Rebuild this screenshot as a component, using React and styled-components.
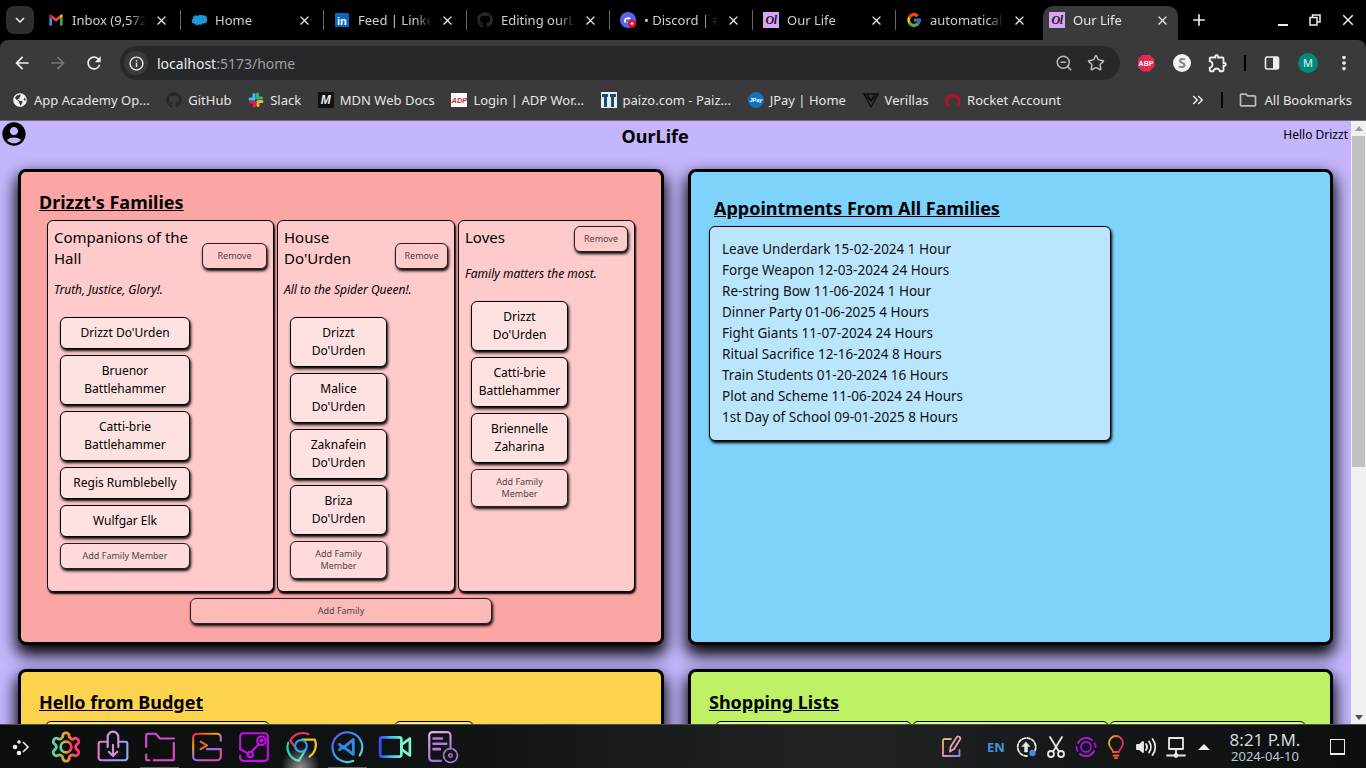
import React from 'react';
import styled, { createGlobalStyle } from 'styled-components';
import { FaGithub, FaGlobeAmericas } from 'react-icons/fa';
import { FcGoogle } from 'react-icons/fc';
import {
	MdAccountCircle, MdAdd, MdArrowBack, MdArrowForward, MdClose, MdKeyboardArrowDown,
	MdKeyboardDoubleArrowRight, MdMoreVert, MdOutlineExtension, MdOutlineFolder, MdOutlineInfo, MdRefresh,
} from 'react-icons/md';
import { Star, ZoomOut } from 'lucide-react';

const GlobalStyle = createGlobalStyle`
	html, body {
		margin: 0;
		padding: 0;
		overflow: hidden;
	}
	body {
		font-family: "Noto Sans", "Open Sans", sans-serif;
	}
	* {
		box-sizing: border-box;
	}
`;

/* ---------- favicons ---------- */

const Fav = styled.svg`
	width: 16px;
	height: 16px;
	flex: none;
`;

const Gmail = () => (
	<Fav viewBox="0 0 24 24">
		<path d="M2 7v12a1.5 1.5 0 0 0 1.5 1.5H6V10z" fill="#4285f4" />
		<path d="M22 7v12a1.5 1.5 0 0 1-1.5 1.5H18V10z" fill="#34a853" />
		<path d="M6 10V5l6 4.5L18 5v5l-6 4.5z" fill="#ea4335" />
		<path d="M18 5l1.7-1.3A1.4 1.4 0 0 1 22 4.8V7l-4 3z" fill="#fbbc04" />
		<path d="M6 5L4.3 3.7A1.4 1.4 0 0 0 2 4.8V7l4 3z" fill="#c5221f" />
	</Fav>
);

const SalesforceIcon = () => (
	<Fav viewBox="0 0 24 24">
		<path d="M10 6a4.2 4.2 0 0 1 6.6-.6A5 5 0 0 1 24 10.5 5 5 0 0 1 17.5 17a3.7 3.7 0 0 1-5.4 1.3A4.3 4.3 0 0 1 5 17.3 3.8 3.8 0 0 1 3 10.2 4.3 4.3 0 0 1 10 6z" fill="#1798d8" />
	</Fav>
);

const LinkedinIcon = () => (
	<Fav viewBox="0 0 16 16">
		<rect x="1" y="1" width="14" height="14" rx="1" fill="#0a66c2" />
		<text x="3" y="12.5" fontSize="11" fontWeight="700" fontFamily="Liberation Sans" fill="#fff">in</text>
	</Fav>
);

const DiscordIcon = () => (
	<Fav viewBox="0 0 16 16">
		<circle cx="8" cy="8" r="8" fill="#5865f2" />
		<path d="M4 9a4 3.5 0 0 1 7-2.5l-2 1a2 2 0 1 0 0 3H4z" fill="#fff" />
		<circle cx="12" cy="11.5" r="4" fill="#e8112d" />
		<circle cx="12" cy="11.5" r="1.3" fill="#fff" />
	</Fav>
);

const OurLifeMark = styled.span`
	width: 16px;
	height: 16px;
	flex: none;
	background: #d8a6f7;
	color: #1d1326;
	font: italic 700 12px/16px "Liberation Serif", serif;
	text-align: center;
	letter-spacing: -0.5px;
`;
const OurLifeIcon = () => <OurLifeMark>Ol</OurLifeMark>;

const SlackIcon = () => (
	<Fav viewBox="0 0 16 16" fill="none" strokeWidth="3" strokeLinecap="round">
		<path d="M6 2.5v4.5H2" stroke="#36c5f0" strokeLinejoin="round" />
		<path d="M13.5 6H9.5V2" stroke="#2eb67d" strokeLinejoin="round" />
		<path d="M10 13.5V9.5h4" stroke="#ecb22e" strokeLinejoin="round" />
		<path d="M2.5 10H6.5v4" stroke="#e01e5a" strokeLinejoin="round" />
	</Fav>
);

const MdnMark = styled.span`
	width: 16px;
	height: 16px;
	flex: none;
	background: #111;
	color: #eee;
	font: italic 700 12px/16px "Liberation Sans", sans-serif;
	text-align: center;
`;
const MdnIcon = () => <MdnMark>M</MdnMark>;

const AdpIcon = () => (
	<Fav viewBox="0 0 16 16">
		<rect y="1" width="16" height="14" fill="#fff" />
		<text x="0.5" y="11" fontSize="7.5" fontWeight="700" fontStyle="italic" fontFamily="Liberation Sans" fill="#e0252c">ADP</text>
	</Fav>
);

const PaizoIcon = () => (
	<Fav viewBox="0 0 16 16">
		<rect width="16" height="16" fill="#e8eef0" />
		<path d="M1 2h6v3H6v10H3V5H1zM9 2h6v3h-2v10h-3V5H9z" fill="#14506e" />
	</Fav>
);

const JpayIcon = () => (
	<Fav viewBox="0 0 16 16">
		<circle cx="8" cy="8" r="8" fill="#1173bb" />
		<text x="1.5" y="10" fontSize="5.5" fontWeight="700" fontStyle="italic" fontFamily="Liberation Sans" fill="#fff">JPay</text>
	</Fav>
);

const VerillasIcon = () => (
	<Fav viewBox="0 0 16 16" fill="none" stroke="#0e0e0e" strokeWidth="1.3">
		<path d="M1 2h14L8 15z" />
		<path d="M4.5 2L8 9l3.5-7M1 2l7 7 7-7" />
	</Fav>
);

const RocketIcon = () => (
	<Fav viewBox="0 0 16 16" fill="none" stroke="#b5102c" strokeWidth="3">
		<path d="M3.5 14A6.3 6.3 0 1 1 12.5 14" />
	</Fav>
);

/* ---------- taskbar drawings ---------- */

const TaskSvg = styled.svg`
	width: 34px;
	height: 34px;
	fill: none;
	stroke-width: 2;
	stroke-linecap: round;
	stroke-linejoin: round;
`;

const Grad = ({ id, colors, x2 = 1, y2 = 1 }) => (
	<defs>
		<linearGradient id={id} x1="0" y1="0" x2={x2} y2={y2}>
			{colors.map((c, i) => <stop key={c + i} offset={i / (colors.length - 1)} stopColor={c} />)}
		</linearGradient>
	</defs>
);

const GearIcon = () => (
	<TaskSvg viewBox="0 0 24 24" strokeWidth="1.5">
		<Grad id="gear" colors={['#4fd8b0', '#f0a020', '#ff2d78']} x2={1} y2={0} />
		<path stroke="url(#gear)" d="M12.22 2h-.44a2 2 0 0 0-2 2v.18a2 2 0 0 1-1 1.73l-.43.25a2 2 0 0 1-2 0l-.15-.08a2 2 0 0 0-2.73.73l-.22.38a2 2 0 0 0 .73 2.73l.15.1a2 2 0 0 1 1 1.72v.51a2 2 0 0 1-1 1.74l-.15.09a2 2 0 0 0-.73 2.73l.22.38a2 2 0 0 0 2.73.73l.15-.08a2 2 0 0 1 2 0l.43.25a2 2 0 0 1 1 1.73V20a2 2 0 0 0 2 2h.44a2 2 0 0 0 2-2v-.18a2 2 0 0 1 1-1.73l.43-.25a2 2 0 0 1 2 0l.15.08a2 2 0 0 0 2.73-.73l.22-.39a2 2 0 0 0-.73-2.73l-.15-.08a2 2 0 0 1-1-1.74v-.5a2 2 0 0 1 1-1.74l.15-.09a2 2 0 0 0 .73-2.73l-.22-.38a2 2 0 0 0-2.73-.73l-.15.08a2 2 0 0 1-2 0l-.43-.25a2 2 0 0 1-1-1.73V4a2 2 0 0 0-2-2z" />
		<circle stroke="url(#gear)" cx="12" cy="12" r="3.8" />
	</TaskSvg>
);

const ShareIcon = () => (
	<TaskSvg viewBox="0 0 32 32">
		<Grad id="share" colors={['#f472b6', '#c084fc', '#93a5f8']} x2={1} y2={0.3} />
		<path stroke="url(#share)" d="M10 11H4.5a2 2 0 0 0-2 2v13A2.5 2.5 0 0 0 5 28.5h22a2.5 2.5 0 0 0 2.5-2.5V13a2 2 0 0 0-2-2H22" />
		<path stroke="#c79be8" d="M11 16V6.5a5 5 0 0 1 10 0V16" />
		<path stroke="#d38fe0" d="M16 14v10M12 20.5l4 4 4-4" />
	</TaskSvg>
);

const FolderIcon = () => (
	<TaskSvg viewBox="0 0 32 32">
		<Grad id="folder" colors={['#c44fd8', '#ef45c8']} />
		<path stroke="url(#folder)" d="M3 16V5a1.5 1.5 0 0 1 1.5-1.5H12l4 4.5h13" />
		<path stroke="url(#folder)" d="M29 12v15a1.5 1.5 0 0 1-1.5 1.5H10" />
		<path stroke="url(#folder)" d="M3 23v4a1.5 1.5 0 0 0 1.5 1.5H6" />
	</TaskSvg>
);

const TerminalIcon = () => (
	<TaskSvg viewBox="0 0 32 32">
		<Grad id="term" colors={['#e8283a', '#f59e0b', '#a06bf0', '#e04aa8']} x2={0.6} y2={1} />
		<path stroke="url(#term)" d="M29 10V7a3.5 3.5 0 0 0-3.5-3.5h-19A3.5 3.5 0 0 0 3 7v18a3.5 3.5 0 0 0 3.5 3.5h19A3.5 3.5 0 0 0 29 25v-7H16" />
		<path stroke="#f0663a" d="M10 11l6 3.5-6 3.5" />
	</TaskSvg>
);

const SteamIcon = () => (
	<TaskSvg viewBox="0 0 32 32" strokeWidth="2.4" stroke="#c80ee8">
		<path d="M3 18V6a3 3 0 0 1 3-3h20a3 3 0 0 1 3 3v20a3 3 0 0 1-3 3H6a3 3 0 0 1-3-3v-2" />
		<path d="M3 18l8 4.5M13.5 20.5l7-7" />
		<circle cx="12.5" cy="23" r="2.5" />
		<circle cx="23" cy="10" r="4" />
		<circle cx="23" cy="10" r="1" />
	</TaskSvg>
);

const ChromeIcon = () => (
	<TaskSvg viewBox="0 0 32 32" strokeWidth="2.2">
		<path stroke="#f0325c" d="M6 10a13 13 0 0 1 17-6" />
		<path stroke="#f0325c" d="M6 10l5 7" />
		<path stroke="#f5c518" d="M17 9h12a13 13 0 0 1-5 16" />
		<path stroke="#1edcb0" d="M4 12a13 13 0 0 0 10 17l6-10" />
		<circle stroke="#2d9cf0" cx="16" cy="15" r="5.5" />
	</TaskSvg>
);

const VscodeIcon = () => (
	<TaskSvg viewBox="0 0 32 32" strokeWidth="2.2">
		<Grad id="vscode" colors={['#5b5cf0', '#2aa5f5', '#6ef0d8']} />
		<path stroke="url(#vscode)" d="M21 29A14 14 0 1 1 27 24" />
		<path stroke="#2d8bf0" strokeWidth="2.6" d="M21 9v14L11 15.5M21 9l-10 8M8 13.5l2.5 2.5L8 18.5" />
	</TaskSvg>
);

const VideoIcon = () => (
	<TaskSvg viewBox="0 0 32 32">
		<Grad id="video" colors={['#3d4cf0', '#36c2f0', '#7ef5d0']} x2={1} y2={0} />
		<rect stroke="url(#video)" x="2" y="7" width="20" height="18" rx="2" strokeWidth="2.5" />
		<path stroke="#7ef5d0" strokeWidth="2.5" d="M30 8v16l-8-6v-4z" />
	</TaskSvg>
);

const DocIcon = () => (
	<TaskSvg viewBox="0 0 32 32">
		<Grad id="doc" colors={['#e8b4dc', '#a070e0']} x2={0.4} y2={1} />
		<path stroke="url(#doc)" d="M15 29H7a3 3 0 0 1-3-3V5a3 3 0 0 1 3-3h14a3 3 0 0 1 3 3v12" />
		<path stroke="#b57bdc" strokeWidth="2.4" d="M8 8h8M8 13h12M8 18h6" />
		<circle stroke="#a87bd8" cx="24" cy="24" r="6.5" strokeWidth="1.6" strokeDasharray="4 1.5" />
		<circle stroke="#a87bd8" cx="24" cy="24" r="1.7" strokeWidth="1.3" />
	</TaskSvg>
);

const TraySvg = styled.svg`
	width: 22px;
	height: 24px;
	fill: none;
	stroke-width: 1.8;
	stroke-linecap: round;
	stroke-linejoin: round;
`;

const NotesIcon = () => (
	<TraySvg viewBox="0 0 22 24">
		<Grad id="notes" colors={['#f0b070', '#e88ab0', '#a080e0']} x2={1} y2={0.8} />
		<path stroke="url(#notes)" d="M10 4H3.5A1.5 1.5 0 0 0 2 5.5V21h16.5v-6" />
		<path stroke="#e8a0b0" d="M15.5 2.5a2 2 0 0 1 3.5 2L13 14l-4 2.5.5-4.5z" />
	</TraySvg>
);

const UploadIcon = () => (
	<TraySvg viewBox="0 0 22 24" stroke="#e8e8e8">
		<path strokeDasharray="3 1.8" d="M12 21a9 9 0 1 1 8-5.5" />
		<path fill="#e8e8e8" d="M11 7l4 4.5h-2.5V17h-3v-5.5H7z" strokeWidth="0.5" />
		<circle cx="17.5" cy="18" r="3.2" fill="#3f8ee0" stroke="none" />
	</TraySvg>
);

const ScissorsIcon = () => (
	<TraySvg viewBox="0 0 22 24" stroke="#e8e8e8" strokeWidth="2.2">
		<path d="M5 2l8.5 14M17 2L8.5 16" />
		<circle cx="6" cy="19" r="3" />
		<circle cx="16" cy="19" r="3" />
	</TraySvg>
);

const RingIcon = () => (
	<TraySvg viewBox="0 0 22 24" stroke="#a010e8" strokeWidth="2">
		<path d="M3 8a9 9 0 0 1 14-3M19 16a9 9 0 0 1-14 3" stroke="#b81ce0" />
		<circle cx="11" cy="12" r="5" />
		<path d="M1.5 12a9.5 9.5 0 0 0 1 4M20.5 12a9.5 9.5 0 0 0-1-4" />
	</TraySvg>
);

const BulbIcon = () => (
	<TraySvg viewBox="0 0 22 24" strokeWidth="2">
		<Grad id="bulb" colors={['#f0c020', '#f86030', '#f02080']} x2={1} y2={0.3} />
		<path stroke="url(#bulb)" d="M8 17c0-3-4-4-4-9a7 7 0 0 1 14 0c0 5-4 6-4 9z" />
		<path stroke="#f86030" d="M8.5 20.5h5M10 23h2" />
	</TraySvg>
);

const SpeakerIcon = () => (
	<TraySvg viewBox="0 0 22 24" stroke="#e8e8e8">
		<path fill="#e8e8e8" d="M2 10h2.5L8 7v10l-3.5-3H2z" />
		<path d="M11 9a5 5 0 0 1 0 6M14 6.5a9 9 0 0 1 0 11M17.5 4a13 13 0 0 1 0 16" />
	</TraySvg>
);

const NetworkIcon = () => (
	<TraySvg viewBox="0 0 22 24" stroke="#e8e8e8" strokeWidth="1.6">
		<rect x="4" y="3" width="14" height="11" />
		<path d="M11 14v6M2 20.5h18" />
		<circle cx="11" cy="20.5" r="1.5" fill="#e8e8e8" />
	</TraySvg>
);

const SidePanelIcon = () => (
	<Fav viewBox="0 0 16 16">
		<rect x="1.5" y="2" width="13" height="12" rx="1.5" fill="none" stroke="#eee" strokeWidth="1.6" />
		<rect x="9" y="2" width="5.5" height="12" fill="#eee" />
	</Fav>
);

const RestoreIcon = () => (
	<svg width="12" height="12" viewBox="0 0 12 12" fill="none" stroke="#eee" strokeWidth="1.5">
		<rect x="1" y="3.5" width="7" height="7.5" fill="#000" />
		<path d="M3.5 3V1h7.5v7H8" />
	</svg>
);

/* ---------- browser chrome ---------- */

const Frame = styled.div`
	width: 1366px;
	height: 768px;
	display: grid;
	grid-template-columns: 1366px;
	grid-template-rows: 40px 40px 41px 1fr 44px;
	overflow: hidden;
	background: #000;
`;

const TabStrip = styled.div`
	display: flex;
	align-items: center;
	padding-left: 6px;
	background: #000;
`;

const TabMenu = styled.div`
	width: 28px;
	height: 28px;
	margin-right: 4px;
	display: flex;
	align-items: center;
	justify-content: center;
	border-radius: 8px;
	background: #2e2e2e;
	color: #f0f0f0;
	font-size: 18px;
`;

const Tab = styled.div`
	position: relative;
	width: 143px;
	height: 40px;
	display: flex;
	align-items: center;
	gap: 8px;
	padding: 0 12px 0 10px;
	color: ${(p) => (p.$active ? '#e8e8e8' : '#cfcfcf')};
	font-size: 13px;
	svg:last-child {
		flex: none;
		color: #eee;
		font-size: 15px;
	}
	&::before {
		content: '';
		display: ${(p) => (p.$active ? 'block' : 'none')};
		position: absolute;
		top: 6px;
		left: 4px;
		right: 4px;
		bottom: 0;
		background: #3a3a3a;
		border-radius: 10px 10px 0 0;
	}
	&::after {
		content: '';
		display: ${(p) => (p.$divider ? 'block' : 'none')};
		position: absolute;
		top: 10px;
		right: 0;
		width: 1px;
		height: 20px;
		background: #666;
	}
	& > * {
		position: relative;
	}
`;

const TabTitle = styled.span`
	flex: 1;
	overflow: hidden;
	white-space: nowrap;
	-webkit-mask-image: linear-gradient(to right, #000 78%, transparent 100%);
	mask-image: linear-gradient(to right, #000 78%, transparent 100%);
`;

const NewTab = styled.div`
	display: flex;
	margin-left: 7px;
	color: #eee;
	font-size: 20px;
`;

const WindowButtons = styled.div`
	margin-left: auto;
	display: flex;
	align-items: center;
	padding-right: 2px;
	color: #eee;
`;

const WindowButton = styled.div`
	width: 32.5px;
	height: 24px;
	display: flex;
	align-items: center;
	justify-content: center;
	font-size: 18px;
`;

const MinimizeBar = styled.span`
	width: 10px;
	height: 2px;
	margin-top: 9px;
	background: #eee;
`;

const Toolbar = styled.div`
	display: flex;
	align-items: center;
	padding: 6px 0 0 4px;
	background: #3a3a3a;
	border-radius: 8px 8px 0 0;
`;

const ToolButton = styled.div`
	width: 36px;
	height: 34px;
	flex: none;
	display: flex;
	align-items: center;
	justify-content: center;
	color: ${(p) => (p.$dim ? '#777' : '#eee')};
	font-size: 20px;
`;

const Omnibox = styled.div`
	width: 1000px;
	height: 34px;
	margin-left: 8px;
	display: flex;
	align-items: center;
	padding: 0 6px 0 4px;
	border-radius: 17px;
	background: #27282b;
	color: #e8eaed;
	font-size: 14px;
`;

const SiteInfo = styled.div`
	width: 24px;
	height: 24px;
	margin-right: 9px;
	display: flex;
	align-items: center;
	justify-content: center;
	border-radius: 50%;
	background: #3a3a3a;
	font-size: 17px;
`;

const UrlRest = styled.span`
	color: #9aa0a6;
`;

const OmniActions = styled.div`
	margin-left: auto;
	display: flex;
	gap: 14px;
	padding-right: 9px;
	color: #bcbcbc;
	svg {
		width: 18px;
		height: 18px;
	}
`;

const ExtensionList = styled.div`
	display: flex;
	align-items: center;
	margin-left: 8px;
`;

const ExtSlot = styled.div`
	width: 36px;
	height: 34px;
	flex: none;
	display: flex;
	align-items: center;
	justify-content: center;
	color: #eee;
	font-size: 22px;
`;

const AbpBadge = styled.div`
	width: 17px;
	height: 17px;
	display: flex;
	align-items: center;
	justify-content: center;
	clip-path: polygon(30% 0, 70% 0, 100% 30%, 100% 70%, 70% 100%, 30% 100%, 0 70%, 0 30%);
	background: #e9284d;
	color: #fff;
	font: 700 7px "Liberation Sans", sans-serif;
`;

const SBadge = styled.div`
	width: 18px;
	height: 18px;
	border-radius: 50%;
	background: #f2f2f2;
	color: #888;
	font: 700 14px/18px "Noto Sans", sans-serif;
	text-align: center;
`;

const ToolDivider = styled.div`
	width: 2px;
	height: 16px;
	margin: 0 8px 0 8px;
	flex: none;
	background: #000;
`;

const Avatar = styled.div`
	width: 20px;
	height: 20px;
	border-radius: 50%;
	background: #00897b;
	color: #e8f5f2;
	font-size: 11px;
	line-height: 20px;
	text-align: center;
`;

const Bookmarks = styled.div`
	display: flex;
	align-items: center;
	gap: 16.7px;
	padding: 0 14px 0 12px;
	background: #3a3a3a;
	border-bottom: 1px solid #6f6f6f;
	color: #e6e6e6;
	font-size: 13px;
	white-space: nowrap;
`;

const Bookmark = styled.div`
	display: flex;
	align-items: center;
	gap: 6px;
`;

const BookmarkEnd = styled.div`
	margin-left: auto;
	display: flex;
	align-items: center;
	gap: 6px;
`;

const BookmarkGap = styled.div`
	width: 2px;
	height: 16px;
	margin: 0 9px 0 8px;
	background: #000;
`;

/* ---------- page ---------- */

const Page = styled.div`
	display: flex;
	min-height: 0;
	background: #c4b5fd;
`;

const Content = styled.div`
	flex: 1;
	min-width: 0;
	overflow: hidden;
`;

const Header = styled.div`
	height: 48px;
	display: flex;
	align-items: flex-start;
	justify-content: space-between;
	padding: 0 3px;
`;

const Logo = styled.h1`
	margin: 3px 0 0;
	font-size: 18px;
	font-weight: 700;
	line-height: 25px;
`;

const Greeting = styled.div`
	margin-top: 5px;
	font-size: 12px;
	line-height: 18px;
`;

const AccountIcon = styled(MdAccountCircle)`
	width: 28px;
	height: 28px;
	margin: -1px -1px 0 -3px;
`;

const Boards = styled.div`
	display: grid;
	grid-template-columns: 646px 645px;
	grid-auto-rows: 476px;
	gap: 24px;
	padding: 0 18px;
`;

const Board = styled.section`
	display: flex;
	flex-direction: column;
	padding: 18px 18px;
	background: ${(p) => p.$bg};
	border: 3px solid #000;
	border-radius: 8px;
	box-shadow: 0 8px 16px 2px #000;
`;

const BoardTitle = styled.h2`
	margin: ${(p) => (p.$inset ? '6px 0 0 5px' : '0')};
	font-size: 18px;
	font-weight: 700;
	line-height: 25px;
	text-decoration: underline;
`;

const CardRow = styled.div`
	display: flex;
	gap: ${(p) => p.$gap}px;
	margin: ${(p) => p.$top}px 0 0 ${(p) => p.$left}px;
`;

const FamilyCard = styled.article`
	width: ${(p) => p.$w}px;
	display: flex;
	flex-direction: column;
	padding: 6px 6px 12px 6px;
	background: #fecaca;
	border: 1px solid #000;
	border-radius: 6px;
	box-shadow: 1px 2px 2px #000;
`;

const FamilyHead = styled.div`
	display: flex;
	align-items: flex-end;
	justify-content: space-between;
	margin: ${(p) => (p.$single ? '-1px 0 1px' : '0')};
`;

const FamilyName = styled.h3`
	align-self: flex-start;
	margin: 0;
	padding-top: ${(p) => (p.$single ? '1px' : '0')};
	font-size: 15px;
	font-weight: 400;
	line-height: 21px;
`;

const Motto = styled.p`
	margin: 12px 0 0;
	font-size: 12px;
	font-style: italic;
	line-height: 18px;
`;

const SmallButton = styled.button`
	flex: none;
	width: ${(p) => (p.$w ? `${p.$w}px` : '100%')};
	margin: 0;
	padding: 6px 4px;
	font-family: inherit;
	font-size: 9px;
	line-height: 12px;
	color: #4f4545;
	background: ${(p) => p.$bg || '#fecaca'};
	border: 1px solid #222;
	border-radius: 6px;
	box-shadow: 1px 2px 3px #000;
`;

const MemberStack = styled.div`
	width: ${(p) => p.$w}px;
	display: flex;
	flex-direction: column;
	gap: 6px;
	margin: 18px 0 0 6px;
`;

const Member = styled.div`
	padding: 6px 5.5px;
	font-size: 12px;
	line-height: 18px;
	text-align: center;
	background: #fee2e2;
	border: 1px solid #000;
	border-radius: 6px;
	box-shadow: 1px 2px 3px #000;
`;

const AddMember = styled(SmallButton)`
	padding: 6px 8px;
`;

const AddFamily = styled(SmallButton)`
	align-self: center;
	width: 302px;
	margin-top: 6px;
`;

const AppointmentBox = styled.div`
	width: 402px;
	margin-top: 5px;
	padding: 12px;
	font-size: 13.5px;
	line-height: 21px;
	color: #111;
	background: #bae6fd;
	border: 1px solid #000;
	border-radius: 6px;
	box-shadow: 1px 2px 3px #000;
`;

const StubCard = styled.div`
	width: ${(p) => p.$w}px;
	height: 120px;
	background: ${(p) => p.$bg};
	border: 1px solid #000;
	border-radius: 6px;
`;

const ScrollTrack = styled.div`
	width: 15px;
	flex: none;
	display: flex;
	flex-direction: column;
	align-items: center;
	background: #f1f1f1;
`;

const ScrollUp = styled.div`
	margin-top: 5px;
	border: 4px solid transparent;
	border-top: 0;
	border-bottom: 5px solid #9b9b9b;
`;

const ScrollThumb = styled.div`
	width: 13px;
	height: 331px;
	margin-top: 5px;
	background: #c1c1c1;
`;

const ScrollDown = styled.div`
	margin-top: auto;
	margin-bottom: 4px;
	border: 4px solid transparent;
	border-bottom: 0;
	border-top: 5px solid #505050;
`;

/* ---------- taskbar ---------- */

const Taskbar = styled.div`
	display: flex;
	align-items: center;
	padding: 0 21px 0 0;
	border-top: 1px solid #4c4c4c;
	background: linear-gradient(90deg, #0c0e0e 0%, #111414 35%, #202524 62%, #141717 80%, #0d0f0f 100%);
`;

const StartDots = styled.div`
	width: 42px;
	display: flex;
	justify-content: center;
	color: #eee;
`;

const TaskApps = styled.div`
	display: flex;
`;

const TaskApp = styled.div`
	position: relative;
	width: 47px;
	height: 43px;
	display: flex;
	align-items: center;
	justify-content: center;
	&::after {
		content: '';
		position: absolute;
		left: 4px;
		right: 4px;
		bottom: 0;
		height: ${(p) => (p.$active ? '22px' : '1px')};
		display: ${(p) => (p.$open ? 'block' : 'none')};
		background: ${(p) => (p.$active
		? 'radial-gradient(ellipse at 50% 100%, rgba(255,255,255,.55), transparent 70%)'
		: 'rgba(255,255,255,.35)')};
	}
`;

const Tray = styled.div`
	margin-left: auto;
	display: flex;
	align-items: center;
`;

const TrayItem = styled.div`
	width: 30px;
	height: 32px;
	display: flex;
	align-items: center;
	justify-content: center;
	margin-left: ${(p) => p.$gap || 0}px;
`;

const LangLabel = styled.span`
	color: #3f95d8;
	font-size: 13px;
	font-weight: 700;
`;

const TrayCaret = styled.span`
	border: 6px solid transparent;
	border-top: 0;
	border-bottom: 6px solid #eee;
`;

const Clock = styled.div`
	width: 80px;
	margin: 0 25px 0 6px;
	text-align: center;
	color: #cfd8dc;
`;

const ClockTime = styled.div`
	font-size: 17px;
	line-height: 19px;
`;

const ClockDate = styled.div`
	font-size: 13px;
	line-height: 15px;
	color: #b9cbd6;
`;

const DesktopButton = styled.div`
	width: 15px;
	height: 16px;
	border: 1px solid #eee;
	border-bottom-width: 2px;
`;

/* ---------- data ---------- */

const tabs = [
	{ title: 'Inbox (9,572', icon: <Gmail />, divider: true },
	{ title: 'Home', icon: <SalesforceIcon />, divider: true },
	{ title: 'Feed | LinkedIn', icon: <LinkedinIcon />, divider: true },
	{ title: 'Editing ourLife', icon: <FaGithub size={16} color="#24292e" />, divider: true },
	{ title: '• Discord | #general', icon: <DiscordIcon />, divider: true },
	{ title: 'Our Life', icon: <OurLifeIcon />, divider: true },
	{ title: 'automatically', icon: <FcGoogle size={16} /> },
	{ title: 'Our Life', icon: <OurLifeIcon />, active: true },
];

const bookmarks = [
	{ label: 'App Academy Op...', icon: <FaGlobeAmericas size={14} color="#f2f2f2" style={{ margin: '0 1px' }} /> },
	{ label: 'GitHub', icon: <FaGithub size={16} color="#24292e" /> },
	{ label: 'Slack', icon: <SlackIcon /> },
	{ label: 'MDN Web Docs', icon: <MdnIcon /> },
	{ label: 'Login | ADP Wor...', icon: <AdpIcon /> },
	{ label: 'paizo.com - Paiz...', icon: <PaizoIcon /> },
	{ label: 'JPay | Home', icon: <JpayIcon /> },
	{ label: 'Verillas', icon: <VerillasIcon /> },
	{ label: 'Rocket Account', icon: <RocketIcon /> },
];

const families = [
	{
		name: 'Companions of the Hall',
		motto: 'Truth, Justice, Glory!.',
		width: 227,
		removeWidth: 65,
		stackWidth: 130,
		members: ["Drizzt Do'Urden", 'Bruenor Battlehammer', 'Catti-brie Battlehammer', 'Regis Rumblebelly', 'Wulfgar Elk'],
	},
	{
		name: "House Do'Urden",
		motto: 'All to the Spider Queen!.',
		width: 178,
		removeWidth: 53,
		stackWidth: 97,
		members: ["Drizzt Do'Urden", "Malice Do'Urden", "Zaknafein Do'Urden", "Briza Do'Urden"],
	},
	{
		name: 'Loves',
		motto: 'Family matters the most.',
		width: 177,
		removeWidth: 54,
		stackWidth: 97,
		single: true,
		members: ["Drizzt Do'Urden", 'Catti-brie Battlehammer', 'Briennelle Zaharina'],
	},
];

const appointments = [
	'Leave Underdark 15-02-2024 1 Hour',
	'Forge Weapon 12-03-2024 24 Hours',
	'Re-string Bow 11-06-2024 1 Hour',
	'Dinner Party 01-06-2025 4 Hours',
	'Fight Giants 11-07-2024 24 Hours',
	'Ritual Sacrifice 12-16-2024 8 Hours',
	'Train Students 01-20-2024 16 Hours',
	'Plot and Scheme 11-06-2024 24 Hours',
	'1st Day of School 09-01-2025 8 Hours',
];

const taskApps = [
	{ id: 'gear', icon: <GearIcon /> },
	{ id: 'share', icon: <ShareIcon /> },
	{ id: 'folder', icon: <FolderIcon />, open: true },
	{ id: 'term', icon: <TerminalIcon /> },
	{ id: 'steam', icon: <SteamIcon /> },
	{ id: 'chrome', icon: <ChromeIcon />, open: true, active: true },
	{ id: 'vscode', icon: <VscodeIcon />, open: true },
	{ id: 'video', icon: <VideoIcon /> },
	{ id: 'doc', icon: <DocIcon /> },
];

function App() {
	return (
		<Frame>
			<GlobalStyle />
			<TabStrip>
				<TabMenu><MdKeyboardArrowDown /></TabMenu>
				{ tabs.map((tab) => (
					<Tab key={tab.title + tab.active} $active={tab.active} $divider={tab.divider}>
						{ tab.icon }
						<TabTitle>{ tab.title }</TabTitle>
						<MdClose />
					</Tab>
				)) }
				<NewTab><MdAdd /></NewTab>
				<WindowButtons>
					<WindowButton><MinimizeBar /></WindowButton>
					<WindowButton><RestoreIcon /></WindowButton>
					<WindowButton><MdClose /></WindowButton>
				</WindowButtons>
			</TabStrip>

			<Toolbar>
				<ToolButton><MdArrowBack /></ToolButton>
				<ToolButton $dim><MdArrowForward /></ToolButton>
				<ToolButton><MdRefresh /></ToolButton>
				<Omnibox>
					<SiteInfo><MdOutlineInfo /></SiteInfo>
					localhost<UrlRest>:5173/home</UrlRest>
					<OmniActions>
						<ZoomOut />
						<Star />
					</OmniActions>
				</Omnibox>
				<ExtensionList>
					<ExtSlot><AbpBadge>ABP</AbpBadge></ExtSlot>
					<ExtSlot><SBadge>S</SBadge></ExtSlot>
					<ExtSlot><MdOutlineExtension /></ExtSlot>
					<ToolDivider />
					<ExtSlot><SidePanelIcon /></ExtSlot>
					<ExtSlot><Avatar>M</Avatar></ExtSlot>
					<ExtSlot><MdMoreVert /></ExtSlot>
				</ExtensionList>
			</Toolbar>

			<Bookmarks>
				{ bookmarks.map((item) => (
					<Bookmark key={item.label}>{ item.icon }{ item.label }</Bookmark>
				)) }
				<BookmarkEnd>
					<MdKeyboardDoubleArrowRight size={18} />
					<BookmarkGap />
					<MdOutlineFolder size={20} color="#bbb" />
					All Bookmarks
				</BookmarkEnd>
			</Bookmarks>

			<Page>
				<Content>
					<Header>
						<AccountIcon />
						<Logo>OurLife</Logo>
						<Greeting>Hello Drizzt</Greeting>
					</Header>
					<Boards>
						<Board $bg="#fca5a5">
							<BoardTitle>Drizzt's Families</BoardTitle>
							<CardRow $gap={3} $top={5} $left={8}>
								{ families.map((family) => (
									<FamilyCard key={family.name} $w={family.width}>
										<FamilyHead $single={family.single}>
											<FamilyName $single={family.single}>{ family.name }</FamilyName>
											<SmallButton $w={family.removeWidth}>Remove</SmallButton>
										</FamilyHead>
										<Motto>{ family.motto }</Motto>
										<MemberStack $w={family.stackWidth}>
											{ family.members.map((member) => <Member key={member}>{ member }</Member>) }
											<AddMember $bg="#fedada">Add Family Member</AddMember>
										</MemberStack>
									</FamilyCard>
								)) }
							</CardRow>
							<AddFamily $bg="#fdb8b8">Add Family</AddFamily>
						</Board>

						<Board $bg="#7dd3fc">
							<BoardTitle $inset>Appointments From All Families</BoardTitle>
							<AppointmentBox>
								{ appointments.map((line) => <div key={line}>{ line }</div>) }
							</AppointmentBox>
						</Board>

						<Board $bg="#fcd34d">
							<BoardTitle>Hello from Budget</BoardTitle>
							<CardRow $gap={124} $top={6} $left={6}>
								<StubCard $w={225} $bg="#fde68a" />
								<StubCard $w={80} $bg="#fde68a" />
							</CardRow>
						</Board>

						<Board $bg="#bef264">
							<BoardTitle>Shopping Lists</BoardTitle>
							<CardRow $gap={0} $top={6} $left={6}>
								<StubCard $w={197} $bg="#d9f99d" />
								<StubCard $w={197} $bg="#d9f99d" />
								<StubCard $w={197} $bg="#d9f99d" />
							</CardRow>
						</Board>
					</Boards>
				</Content>
				<ScrollTrack>
					<ScrollUp />
					<ScrollThumb />
					<ScrollDown />
				</ScrollTrack>
			</Page>

			<Taskbar>
				<StartDots>
					<svg width="18" height="18" viewBox="0 0 18 18" fill="none" stroke="#eee" strokeWidth="1.6">
						<circle cx="3" cy="9" r="1.5" fill="#eee" />
						<circle cx="7" cy="4" r="1" fill="#eee" />
						<circle cx="7" cy="15" r="1.5" fill="#eee" />
						<path d="M11 4l5 5-5 5" />
					</svg>
				</StartDots>
				<TaskApps>
					{ taskApps.map((app) => (
						<TaskApp key={app.id} $open={app.open} $active={app.active}>{ app.icon }</TaskApp>
					)) }
				</TaskApps>
				<Tray>
					<TrayItem><NotesIcon /></TrayItem>
					<TrayItem $gap={14}><LangLabel>EN</LangLabel></TrayItem>
					<TrayItem><UploadIcon /></TrayItem>
					<TrayItem><ScissorsIcon /></TrayItem>
					<TrayItem><RingIcon /></TrayItem>
					<TrayItem><BulbIcon /></TrayItem>
					<TrayItem><SpeakerIcon /></TrayItem>
					<TrayItem><NetworkIcon /></TrayItem>
					<TrayItem $gap={-2}><TrayCaret /></TrayItem>
					<Clock>
						<ClockTime>8:21 P.M.</ClockTime>
						<ClockDate>2024-04-10</ClockDate>
					</Clock>
					<DesktopButton />
				</Tray>
			</Taskbar>
		</Frame>
	);
}

export default App;
